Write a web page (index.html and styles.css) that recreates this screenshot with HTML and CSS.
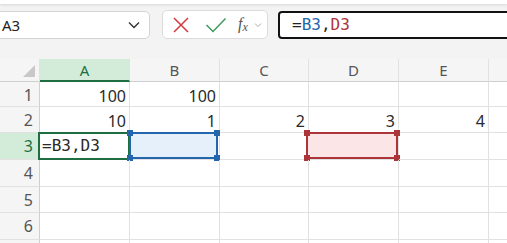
FILE: index.html
```html
<!DOCTYPE html>
<html lang="en">
  <head>
    <meta charset="UTF-8" />
    <title>Sheet</title>
    <link rel="stylesheet" href="styles.css">
  </head>
  <body>
    <div class="topstrip"></div>
    <div class="toolbar">
      <div class="namebox">
        <span>A3</span>
        <svg class="chev" width="12" height="8" viewBox="0 0 12 8"><path d="M1 1.5 L6 6.5 L11 1.5" fill="none" stroke="#333" stroke-width="1.4"/></svg>
      </div>
      <div class="fnbox">
        <svg class="cancel" width="18" height="18" viewBox="0 0 18 18"><path d="M2 2 L16 16 M16 2 L2 16" stroke="#d4373c" stroke-width="1.5" fill="none"/></svg>
        <svg class="enter" width="22" height="16" viewBox="0 0 22 16"><path d="M1.5 8 L8 14.5 L20.5 1.5" stroke="#3e9a5c" stroke-width="1.5" fill="none"/></svg>
        <span class="fx"><i>f</i><sub>x</sub></span>
        <svg class="chev-sm" width="8" height="6" viewBox="0 0 8 6"><path d="M1 1.5 L4 4.5 L7 1.5" fill="none" stroke="#aaa" stroke-width="1"/></svg>
      </div>
      <div class="formula">=<span class="ref-b">B3</span>,<span class="ref-d">D3</span></div>
    </div>

    <div class="sheet">
      <div class="corner"><span class="tri"></span></div>
      <div class="colhead active">A</div>
      <div class="colhead">B</div>
      <div class="colhead">C</div>
      <div class="colhead">D</div>
      <div class="colhead">E</div>
      <div class="colhead last"></div>

      <div class="rowhead">1</div>
      <div class="cell">100</div>
      <div class="cell">100</div>
      <div class="cell"></div>
      <div class="cell"></div>
      <div class="cell"></div>
      <div class="cell last"></div>

      <div class="rowhead">2</div>
      <div class="cell">10</div>
      <div class="cell">1</div>
      <div class="cell">2</div>
      <div class="cell">3</div>
      <div class="cell">4</div>
      <div class="cell last"></div>

      <div class="rowhead active">3</div>
      <div class="cell edit">=B3,D3<span class="cursor-box"></span></div>
      <div class="cell">
        <span class="range blue"><i class="h tl"></i><i class="h tr"></i><i class="h bl"></i><i class="h br"></i></span>
      </div>
      <div class="cell"></div>
      <div class="cell">
        <span class="range red"><i class="h tl"></i><i class="h tr"></i><i class="h bl"></i><i class="h br"></i></span>
      </div>
      <div class="cell"></div>
      <div class="cell last"></div>

      <div class="rowhead">4</div>
      <div class="cell"></div><div class="cell"></div><div class="cell"></div><div class="cell"></div><div class="cell"></div><div class="cell last"></div>

      <div class="rowhead">5</div>
      <div class="cell"></div><div class="cell"></div><div class="cell"></div><div class="cell"></div><div class="cell"></div><div class="cell last"></div>

      <div class="rowhead">6</div>
      <div class="cell"></div><div class="cell"></div><div class="cell"></div><div class="cell"></div><div class="cell"></div><div class="cell last"></div>

      <div class="rowhead"></div>
      <div class="cell"></div><div class="cell"></div><div class="cell"></div><div class="cell"></div><div class="cell"></div><div class="cell last"></div>
    </div>
  </body>
</html>
```

FILE: styles.css
```css
:root {
  --grid-line: #e1e1e1;
  --head-bg: #f5f5f5;
  --green: #1e6e42;
  --green-light: #d3ecda;
  --blue: #2366ad;
  --red: #ad3438;
  --text: #2a2a2a;
}

* {
  margin: 0;
  padding: 0;
  box-sizing: border-box;
}

body {
  width: 507px;
  height: 243px;
  overflow: hidden;
  background: #f3f3f3;
  font-family: "Noto Sans", sans-serif;
  color: var(--text);
}

.topstrip {
  height: 4px;
  background: #fff;
  box-shadow: 0 1px 3px rgba(0, 0, 0, 0.12);
}

.toolbar {
  height: 53px;
  display: flex;
  align-items: flex-start;
  padding-top: 7px;
}

.namebox {
  width: 154px;
  height: 28px;
  margin-left: -4px;
  background: #fff;
  border: 1px solid #d4d4d4;
  border-radius: 5px;
  display: flex;
  align-items: center;
  justify-content: space-between;
  padding: 0 9px 0 5px;
  font-size: 15px;
  color: #222;
}

.namebox span {
  line-height: 1;
  margin-top: 1px;
}

.fnbox {
  width: 106px;
  height: 29px;
  margin-left: 12px;
  margin-top: -1px;
  background: #fff;
  border: 1px solid #dcdcdc;
  border-radius: 5px;
  display: flex;
  align-items: center;
  padding-left: 9px;
}

.fnbox .cancel {
  margin-right: 15px;
}

.fnbox .enter {
  margin-right: 11px;
}

.fx {
  font-family: "Liberation Serif", serif;
  font-size: 16px;
  color: #555;
  line-height: 1;
}

.fx sub {
  font-size: 12px;
  font-style: italic;
  vertical-align: -2px;
}

.chev-sm {
  margin-left: 6px;
}

.formula {
  flex: 1;
  height: 28px;
  margin-left: 10px;
  margin-right: -10px;
  background: #fff;
  border: 2px solid #111;
  border-radius: 4px;
  padding-left: 12px;
  font-family: "DejaVu Sans Mono", monospace;
  font-size: 16px;
  line-height: 24px;
  color: #222;
}

.ref-b {
  color: var(--blue);
}

.ref-d {
  color: var(--red);
}

.sheet {
  display: grid;
  grid-template-columns: 40px 90px 90px 89px 90px 90px 1fr;
  grid-template-rows: 23px 25px 26px 27px 27px 26px 27px 27px;
  background: #fff;
  margin-top: 2px;
}

.corner {
  background: var(--head-bg);
  border-right: 1px solid var(--grid-line);
  border-bottom: 1px solid #cfcfcf;
  position: relative;
}

.tri {
  position: absolute;
  right: 4px;
  bottom: 4px;
  width: 0;
  height: 0;
  border-left: 12px solid transparent;
  border-bottom: 12px solid #c8c8c8;
}

.colhead {
  background: var(--head-bg);
  border-right: 1px solid var(--grid-line);
  border-bottom: 1px solid #cfcfcf;
  text-align: center;
  font-size: 15px;
  line-height: 22px;
  color: #555;
}

.colhead.active {
  background: var(--green-light);
  border-bottom: 2px solid var(--green);
  color: var(--green);
}

.colhead.last,
.cell.last {
  border-right: none;
}

.rowhead {
  background: var(--head-bg);
  border-right: 1px solid #cfcfcf;
  border-bottom: 1px solid var(--grid-line);
  text-align: right;
  padding-right: 6px;
  font-size: 16px;
  line-height: 26px;
  color: #555;
}

.rowhead.active {
  background: var(--green-light);
  color: var(--green);
  border-right: 2px solid var(--green);
  padding-right: 5px;
}

.cell {
  position: relative;
  border-right: 1px solid var(--grid-line);
  border-bottom: 1px solid var(--grid-line);
  text-align: right;
  padding-right: 3px;
  font-size: 16px;
  line-height: 28px;
  color: var(--text);
}

.cell.edit {
  text-align: left;
  padding-left: 2px;
  font-family: "DejaVu Sans Mono", monospace;
  font-size: 16px;
  line-height: 25px;
}

.cursor-box {
  position: absolute;
  left: -2px;
  top: -1px;
  right: -1px;
  bottom: -1px;
  border: 2px solid var(--green);
}

.range {
  position: absolute;
  left: -1px;
  top: -1px;
  right: 0;
  bottom: 0;
  border: 2px solid;
}

.range.blue {
  background: #e6f0fa;
  border-color: var(--blue);
  right: 1px;
}

.range.red {
  background: #fbe5e7;
  border-color: var(--red);
  left: -3px;
  right: 0;
}

.h {
  position: absolute;
  width: 6px;
  height: 6px;
}

.blue .h {
  background: var(--blue);
}

.red .h {
  background: var(--red);
}

.h.tl {
  left: -4px;
  top: -4px;
}

.h.tr {
  right: -4px;
  top: -4px;
}

.h.bl {
  left: -4px;
  bottom: -4px;
}

.h.br {
  right: -4px;
  bottom: -4px;
}
```
